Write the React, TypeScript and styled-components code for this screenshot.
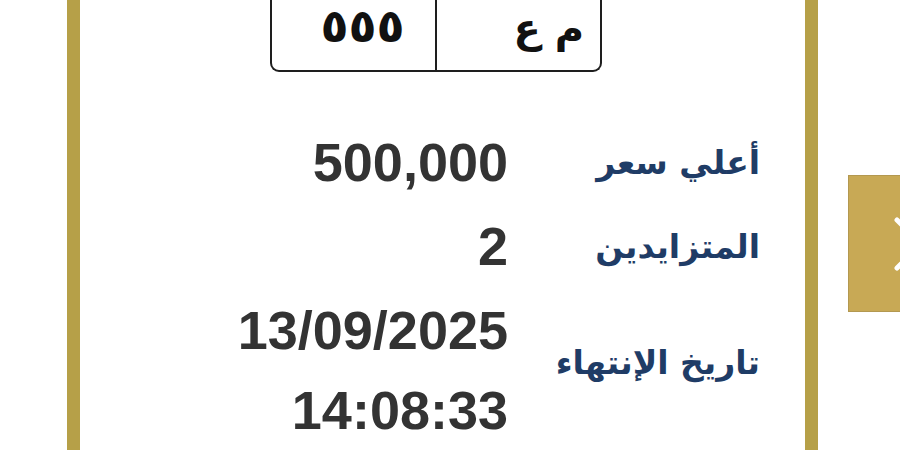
import React from "react";
import styled, { createGlobalStyle } from "styled-components";

const Gold = "#b6a048";

const GlobalStyle = createGlobalStyle`
  html, body {
    margin: 0;
    padding: 0;
    background: #ffffff;
    overflow: hidden;
  }
`;

const Page = styled.div`
  display: flex;
  align-items: flex-start;
  width: 900px;
  height: 450px;
  padding-left: 67px;
  box-sizing: border-box;
  overflow: hidden;
`;

const Card = styled.div`
  flex: none;
  display: flex;
  flex-direction: column;
  width: 751px;
  height: 450px;
  box-sizing: border-box;
  border-left: 13px solid ${Gold};
  border-right: 13px solid ${Gold};
  background: #ffffff;
`;

const Plate = styled.div`
  display: grid;
  grid-template-columns: 165px 1fr;
  width: 332px;
  height: 72px;
  margin-left: 190px;
  box-sizing: border-box;
  border: 2px solid #1e1e1e;
  border-top: none;
  border-radius: 0 0 9px 9px;
`;

const PlateCell = styled.div<{ $align: "center" | "right"; $divider?: boolean }>`
  display: flex;
  align-items: center;
  justify-content: ${(p) => (p.$align === "center" ? "center" : "flex-end")};
  padding: ${(p) => (p.$align === "center" ? "0 0 18px 18px" : "0 16px 14px 0")};
  border-right: ${(p) => (p.$divider ? "2px solid #1e1e1e" : "none")};
  font-family: "DejaVu Sans", sans-serif;
  font-weight: bold;
  font-size: ${(p) => (p.$align === "center" ? "46px" : "40px")};
  color: #111111;
  line-height: 1;
`;

const Table = styled.div`
  direction: rtl;
  display: grid;
  grid-template-columns: 230px auto;
  justify-content: start;
  column-gap: 22px;
  row-gap: 4px;
  margin-top: 50px;
  padding-right: 45px;
`;

const Label = styled.div<{ $shift?: number }>`
  align-self: center;
  margin-bottom: ${(p) => p.$shift ?? 0}px;
  font-family: "DejaVu Sans", sans-serif;
  font-weight: bold;
  font-size: 33px;
  color: #1f3c66;
  text-align: right;
  white-space: nowrap;
`;

const Value = styled.div`
  font-family: "Liberation Sans", Arial, sans-serif;
  font-weight: bold;
  font-size: 54px;
  line-height: 80px;
  color: #333333;
  text-align: right;
  direction: ltr;
`;

const SideNav = styled.div`
  flex: none;
  width: 90px;
  height: 137px;
  margin-top: 175px;
  margin-left: 30px;
  box-sizing: border-box;
  background: #c8a955;
  border: 1px solid #b39850;
`;

const NavIcon = styled.svg`
  display: block;
  margin: 41px 0 0 44px;
`;

const rows = [
  { label: "أعلي سعر", value: ["500,000"] },
  { label: "المتزايدين", value: ["2"] },
  { label: "تاريخ الإنتهاء", value: ["13/09/2025", "14:08:33"], shift: 16 },
];

const App = () => (
  <>
    <GlobalStyle />
    <Page>
      <Card>
        <Plate>
          <PlateCell $align="center" $divider>
            ٥٥٥
          </PlateCell>
          <PlateCell $align="right">م ع</PlateCell>
        </Plate>
        <Table>
          {rows.map((row) => (
            <React.Fragment key={row.label}>
              <Label $shift={row.shift}>{row.label}</Label>
              <Value>
                {row.value.map((line) => (
                  <div key={line}>{line}</div>
                ))}
              </Value>
            </React.Fragment>
          ))}
        </Table>
      </Card>
      <SideNav>
        <NavIcon width="40" height="56" viewBox="0 0 40 56">
          <path
            d="M4 3 L28 27 L4 51"
            fill="none"
            stroke="#ffffff"
            strokeWidth="5"
            strokeLinecap="round"
            strokeLinejoin="round"
          />
        </NavIcon>
      </SideNav>
    </Page>
  </>
);

export default App;
